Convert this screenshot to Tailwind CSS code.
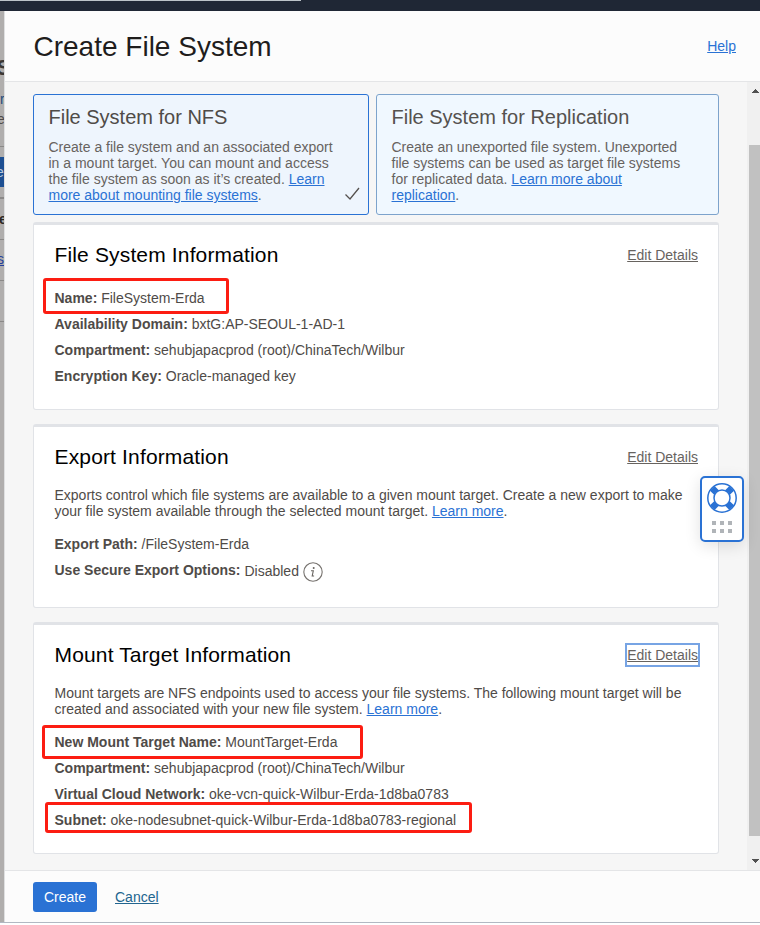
<!DOCTYPE html>
<html lang="en">
<head>
<meta charset="utf-8">
<title>Create File System</title>
<script src="https://cdn.jsdelivr.net/npm/@tailwindcss/browser@4"></script>
</head>
<body class="w-[760px] h-[925px] overflow-hidden bg-white font-['Liberation_Sans',Arial,sans-serif] text-[14px] leading-4 text-[#4f4b48]">
<div class="relative flex h-[925px] flex-col">
  <div class="h-[11px] shrink-0 bg-[#1f2735]"><div class="h-px w-[301px] bg-[#bcc3c8]"></div></div>
  <div class="flex h-[911px] shrink-0">
    <!-- Dimmed page behind the panel -->
    <div class="relative w-1 shrink-0 overflow-hidden bg-[#b0aead]">
      <div class="absolute -left-[13px] top-[45px] w-[24px] text-right text-[22px] leading-6 font-bold text-[#3b3735]">S</div>
      <div class="absolute left-0 top-[80px] text-[#244b7c]">r</div>
      <div class="absolute -left-[3px] top-[100px]">e</div>
      <div class="absolute left-0 top-[135px] h-px w-1 bg-[#8b8988]"></div>
      <div class="absolute left-0 top-[146px] h-[30px] w-1 overflow-hidden bg-[#1d4f92]"><div class="-ml-[4px] mt-[7px] text-white/70">e</div></div>
      <div class="absolute left-0 top-[186px] h-0.5 w-1 bg-[#8b8988]"></div>
      <div class="absolute -left-[1px] top-[200px] font-bold text-[#2b2725]">e</div>
      <div class="absolute left-0 top-[228px] h-px w-1 bg-[#8b8988]"></div>
      <div class="absolute -left-[3px] top-[240px] text-[#243f9c] underline">s</div>
      <div class="absolute left-0 top-[269px] h-px w-1 bg-[#8b8988]"></div>
      <div class="absolute left-0 top-[310px] h-px w-1 bg-[#8b8988]"></div>
    </div>
    <div class="flex w-[756px] shrink-0 flex-col border-l border-[#dfe0e1] bg-[#fcfcfc]">
      <header class="flex h-[71px] shrink-0 items-center justify-between border-b border-[#e4e5e7] pl-[28.5px] pr-[24px]">
        <h1 class="pt-px text-[28px] leading-8 text-[#1f1d1c]">Create File System</h1>
        <a class="text-[#2a72d4] underline">Help</a>
      </header>
      <div class="flex h-[788px] shrink-0 bg-[#f6f6f6]">
        <main class="w-[742px] shrink-0 pl-[28px] pt-3">
          <div class="flex gap-[7px]">
            <section class="relative h-[121px] w-[336px] rounded-[3px] border border-[#2a72d4] bg-[#eef5fd] pl-[14.5px] pt-[10px] whitespace-nowrap">
              <h2 class="text-[20px] leading-6 text-[#4f4b48]">File System for NFS</h2>
              <p class="mt-[10px] text-[#67635f]">Create a file system and an associated export<br>in a mount target. You can mount and access<br>the file system as soon as it’s created. <a class="text-[#2a72d4] underline">Learn<br>more about mounting file systems</a>.</p>
              <svg class="absolute left-[310px] top-[92px]" width="17" height="15" viewBox="0 0 17 15" fill="none" stroke="#55514e" stroke-width="1.3"><path d="M1.5 7.5 6 12 15 1"/></svg>
            </section>
            <section class="h-[121px] w-[343px] rounded-[3px] border border-[#7da3cc] bg-[#f0f8ff] pl-[14.5px] pt-[10px] whitespace-nowrap">
              <h2 class="text-[20px] leading-6 text-[#55524f]">File System for Replication</h2>
              <p class="mt-[10px] text-[#67635f]">Create an unexported file system. Unexported<br>file systems can be used as target file systems<br>for replicated data. <a class="text-[#2a72d4] underline">Learn more about<br>replication</a>.</p>
            </section>
          </div>
          <section class="mt-[7px] h-[188px] w-[686px] rounded-[3px] border border-t-[3px] border-[#e1e3e7] bg-white pl-[20.5px] pr-5 pt-[18px] whitespace-nowrap">
            <div class="flex items-center justify-between"><h2 class="text-[21px] leading-6 tracking-[0.15px] text-black">File System Information</h2><a class="text-[#67635f] underline">Edit Details</a></div>
            <div class="relative mt-[18px] leading-[26px]">
              <div><b>Name:</b> FileSystem-Erda</div>
              <div><b>Availability Domain:</b> bxtG:AP-SEOUL-1-AD-1</div>
              <div><b>Compartment:</b> sehubjapacprod (root)/ChinaTech/Wilbur</div>
              <div><b>Encryption Key:</b> Oracle-managed key</div>
              <div class="absolute left-[-11.5px] top-[-7px] h-[36px] w-[186px] rounded-[3px] border-[3px] border-[#fc1d12]"></div>
            </div>
          </section>
          <section class="mt-[14px] h-[184px] w-[686px] rounded-[3px] border border-t-[3px] border-[#e1e3e7] bg-white pl-[20.5px] pr-5 pt-[18px] whitespace-nowrap">
            <div class="flex items-center justify-between"><h2 class="text-[21px] leading-6 tracking-[0.15px] text-black">Export Information</h2><a class="text-[#67635f] underline">Edit Details</a></div>
            <p class="mt-[18px]">Exports control which file systems are available to a given mount target. Create a new export to make<br>your file system available through the selected mount target. <a class="text-[#2a72d4] underline">Learn more</a>.</p>
            <div class="mt-3 leading-[26px]">
              <div><b>Export Path:</b> /FileSystem-Erda</div>
              <div class="flex"><b>Use Secure Export Options:</b><span class="ml-1 mt-px">Disabled</span>
                <svg class="ml-[4.5px] mt-[5px]" width="20" height="20" viewBox="0 0 20 20"><circle cx="10" cy="10" r="9.2" fill="none" stroke="#77736f" stroke-width="1.1"/><circle cx="10.7" cy="5.9" r="1" fill="#67635f"/><path d="M8 8.8h2.3L9.2 14h1.9" fill="none" stroke="#67635f" stroke-width="1.1"/></svg>
              </div>
            </div>
          </section>
          <section class="mt-[14px] h-[232px] w-[686px] rounded-[3px] border border-t-[3px] border-[#e1e3e7] bg-white pl-[20.5px] pr-5 pt-[18px] whitespace-nowrap">
            <div class="flex items-center justify-between"><h2 class="text-[21px] leading-6 tracking-[0.15px] text-black">Mount Target Information</h2><a class="-mr-0.5 border-2 border-[#77a4e4] py-[2px] text-[#67635f] underline">Edit Details</a></div>
            <p class="mt-[18px]">Mount targets are NFS endpoints used to access your file systems. The following mount target will be<br>created and associated with your new file system. <a class="text-[#2a72d4] underline">Learn more</a>.</p>
            <div class="relative mt-3 leading-[26px]">
              <div><b>New Mount Target Name:</b> MountTarget-Erda</div>
              <div><b>Compartment:</b> sehubjapacprod (root)/ChinaTech/Wilbur</div>
              <div><b>Virtual Cloud Network:</b> oke-vcn-quick-Wilbur-Erda-1d8ba0783</div>
              <div><b>Subnet:</b> oke-nodesubnet-quick-Wilbur-Erda-1d8ba0783-regional</div>
              <div class="absolute left-[-12.5px] top-[-4px] h-[34px] w-[321px] rounded-[3px] border-[3px] border-[#fc1d12]"></div>
              <div class="absolute left-[-9.5px] top-[73px] h-[31px] w-[427px] rounded-[3px] border-[3px] border-[#fc1d12]"></div>
            </div>
          </section>
        </main>
        <div class="relative flex w-[17px] shrink-0 flex-col bg-[#f0f0f0]">
          <svg class="absolute left-[5px] top-[7px]" width="7" height="4" viewBox="0 0 7 4" shape-rendering="crispEdges"><path fill="#505050" d="M3 0h1v1h1v1h1v1h1v1H0V3h1V2h1V1h1z"/></svg>
          <div class="ml-[2px] mt-[63px] h-[691px] bg-[#c1c1c1]"></div>
          <svg class="absolute left-[5px] top-[777px]" width="7" height="4" viewBox="0 0 7 4" shape-rendering="crispEdges"><path fill="#505050" d="M0 0h7v1H6v1H5v1H4v1H3V3H2V2H1V1H0z"/></svg>
        </div>
      </div>
      <footer class="flex h-[52px] shrink-0 items-center border-t border-[#e4e5e7] pl-[28px]">
        <button class="h-[30px] w-[64px] rounded-[3px] bg-[#2a72d4] text-white">Create</button>
        <a class="ml-[18px] text-[#22658f] underline">Cancel</a>
      </footer>
    </div>
  </div>
  <div class="h-px bg-[#b1b8c2]"></div>
  <!-- Floating support widget -->
  <div class="absolute left-[700px] top-[476px] flex h-[66px] w-[44px] flex-col items-center rounded-[5px] border-2 border-[#2a72d4] bg-white pt-[5px] shadow-[0_4px_16px_rgba(0,0,0,0.12)]">
    <svg width="30" height="30" viewBox="0 0 30 30" fill="none" stroke="#2a72d4"><path d="M5.3 5.3 10 10M20 10l4.7-4.7M20 20l4.7 4.7M5.3 24.7 10 20" stroke-width="6.6"/><circle cx="15" cy="15" r="14.2" stroke-width="1.5"/><circle cx="15" cy="15" r="8" fill="#fff" stroke-width="1.5"/></svg>
    <div class="mt-2 grid grid-cols-3 gap-1"><i class="size-1 bg-[#b0b4b8]"></i><i class="size-1 bg-[#b0b4b8]"></i><i class="size-1 bg-[#b0b4b8]"></i><i class="size-1 bg-[#b0b4b8]"></i><i class="size-1 bg-[#b0b4b8]"></i><i class="size-1 bg-[#b0b4b8]"></i></div>
  </div>
</div>
</body>
</html>
